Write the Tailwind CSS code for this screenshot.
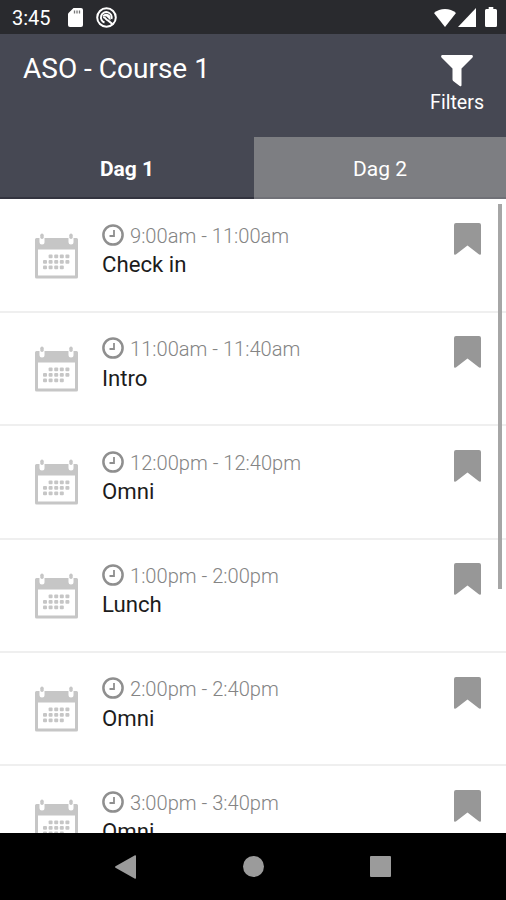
<!DOCTYPE html>
<html lang="en">
<head>
  <meta charset="UTF-8">
  <meta name="viewport" content="width=device-width, initial-scale=1.0">
  <title>ASO - Course 1</title>
  <script src="https://cdn.jsdelivr.net/npm/@tailwindcss/browser@4"></script>
</head>
<body class="bg-white font-['Roboto',sans-serif]">
  <div class="flex flex-col w-[506px] h-[900px] overflow-hidden">

    <!-- Status bar -->
    <div class="flex items-center h-[34px] shrink-0 bg-[#292a2e] pl-3 pr-[9px] text-white">
      <span class="w-[39px] text-[20px] leading-none whitespace-nowrap pt-0.5">3:45</span>
      <svg class="ml-[17px]" width="15" height="19" viewBox="0 0 15 19">
        <path d="M5.500 0H13a2 2 0 0 1 2 2V17a2 2 0 0 1-2 2H2a2 2 0 0 1-2-2V5.500z" fill="#fff"/>
        <path d="M6.500 2.500v3M9 2.500v3M11.500 2.500v3" stroke="#777" stroke-width="1.300"/>
      </svg>
      <svg class="ml-[13px]" width="21" height="21" viewBox="0 0 21 21" fill="none" stroke="#fff">
        <circle cx="10.500" cy="10.500" r="9.300" stroke-width="2"/>
        <path d="M8.500 15.500A5.400 5.400 0 1 1 15.500 12" stroke-width="1.900"/>
        <path d="M6.500 9C8 6 13 6 14.500 9.500v4L10.500 9.500z" fill="#fff" stroke="none"/>
        <path d="M7 10.500c2-1 3 2.500 5 3L17 17.500" stroke-width="2"/>
      </svg>
      <svg class="ml-auto" width="22" height="19" viewBox="0 0 22 19">
        <path d="M11 19L0 5C6-.5 16-.5 22 5z" fill="#fff"/>
      </svg>
      <svg class="ml-0.5" width="18" height="19" viewBox="0 0 18 19">
        <path d="M18 0V19H0z" fill="#fff"/>
      </svg>
      <svg class="ml-[9px]" width="12" height="20" viewBox="0 0 13 20" preserveAspectRatio="none">
        <path d="M4 0h5v2h2.500A1.500 1.500 0 0 1 13 3.500v15a1.500 1.500 0 0 1-1.500 1.500h-10A1.500 1.500 0 0 1 0 18.500v-15A1.500 1.500 0 0 1 1.500 2H4z" fill="#fff"/>
      </svg>
    </div>

    <!-- Header -->
    <header class="flex justify-between h-[103px] shrink-0 bg-[#464853] pl-[23px] pr-[22px] text-white">
      <h1 class="pt-[17px] text-[28px] leading-9 whitespace-nowrap">ASO - Course 1</h1>
      <button class="flex flex-col items-center pt-[21px]">
        <svg width="32" height="32" viewBox="0 0 32 32">
          <path d="M1.500 0h29c1.300 0 1.800 1.500 1 2.400L20.500 13.500V30c0 1.300-.8 1.600-1.800 1L12.500 26.200c-.6-.5-1-1-1-1.800V13.500L.5 2.400C-.3 1.500.2 0 1.500 0z" fill="#fff"/>
        </svg>
        <span class="mt-1 text-[19.6px] leading-6">Filters</span>
      </button>
    </header>

    <!-- Day tabs -->
    <nav class="grid grid-cols-[254px_252px] h-[62px] shrink-0 text-[21px] text-white">
      <button class="flex items-center justify-center border-b-2 border-[#33343f] bg-[#464853] pt-1.5 font-bold">Dag 1</button>
      <button class="flex items-center justify-center border-b-2 border-[#707177] bg-[#7d7e82] pt-1.5">Dag 2</button>
    </nav>

    <!-- Schedule -->
    <main class="relative h-[634px] shrink-0 overflow-hidden bg-white">
      <div id="schedule" class="pt-[0.5px]"></div>
      <div class="absolute right-1 top-[5px] w-1 h-[385px] bg-[#a6a6a6]"></div>
    </main>

    <!-- Navigation bar -->
    <footer class="flex items-center justify-between h-[67px] shrink-0 bg-black px-[115px]">
      <svg width="21" height="24" viewBox="0 0 21 24"><path d="M20 .3a.8.8 0 0 1 1 .7v22a.8.8 0 0 1-1 .7L.5 12.700a.8.8 0 0 1 0-1.400z" fill="#9b9b9b"/></svg>
      <div class="w-[21px] h-[21px] rounded-full bg-[#9b9b9b]"></div>
      <div class="w-[21px] h-[21px] rounded-[1px] bg-[#9b9b9b]"></div>
    </footer>
  </div>

  <script>
    const sessions = [
      { time: "9:00am - 11:00am", title: "Check in" },
      { time: "11:00am - 11:40am", title: "Intro" },
      { time: "12:00pm - 12:40pm", title: "Omni" },
      { time: "1:00pm - 2:00pm", title: "Lunch" },
      { time: "2:00pm - 2:40pm", title: "Omni" },
      { time: "3:00pm - 3:40pm", title: "Omni" }
    ];

    // day squares of the calendar icon: [first column, last column] per row
    const dayRows = [[1, 4], [0, 4], [0, 3]];
    const days = dayRows.map(([from, to], row) => {
      let out = "";
      for (let col = from; col <= to; col++) {
        out += `<rect x="${8 + col * 5.6}" y="${21.5 + row * 5.5}" width="4" height="3.800" rx="1"/>`;
      }
      return out;
    }).join("");

    document.getElementById("schedule").innerHTML = sessions.map(session => `
      <div class="flex h-[113.4px] border-b-2 border-[#efefef] pl-[35px] pr-[25px]">
        <svg class="mt-[33px] shrink-0" width="43" height="46" viewBox="0 0 43 46" fill="#c6c6c6">
          <path fill-rule="evenodd" d="M1.500 5h40A1.500 1.500 0 0 1 43 6.500v37.500a1.500 1.500 0 0 1-1.500 1.500h-40A1.500 1.500 0 0 1 0 44v-37.500A1.500 1.500 0 0 1 1.500 5zM3 16.500V42.500h37V16.500z"/>
          <rect x="4.500" y="2" width="5" height="9.500" rx="2.500" fill="#fff"/>
          <rect x="33.500" y="2" width="5" height="9.500" rx="2.500" fill="#fff"/>
          <rect x="5.300" y="0.500" width="3.400" height="5.500" rx="1.700"/>
          <rect x="34.300" y="0.500" width="3.400" height="5.500" rx="1.700"/>
          ${days}
        </svg>
        <div class="ml-6 pt-[23.4px]">
          <div class="flex items-center h-6">
            <svg width="22" height="22" viewBox="0 0 22 22" fill="none" stroke="#8f8f8f">
              <circle cx="11" cy="11" r="9.600" stroke-width="2.500"/>
              <path d="M12 6v6H7.500" stroke-width="1.800"/>
            </svg>
            <span class="ml-1.5 pt-0.5 text-[20.1px] font-light text-[#848484] whitespace-nowrap">${session.time}</span>
          </div>
          <div class="mt-[3.400px] text-[22.2px] leading-7 text-[#1c1c1c]">${session.title}</div>
        </div>
        <svg class="ml-auto mt-[23.5px] shrink-0" width="27" height="32" viewBox="0 0 27 32">
          <path d="M2 0h23a2 2 0 0 1 2 2v28.500c0 1.300-1.300 1.700-2.200.8L13.500 22.500 2.200 31.300C1.300 32.200 0 31.800 0 30.500V2a2 2 0 0 1 2-2z" fill="#979797"/>
        </svg>
      </div>
    `).join("");
  </script>
</body>
</html>
